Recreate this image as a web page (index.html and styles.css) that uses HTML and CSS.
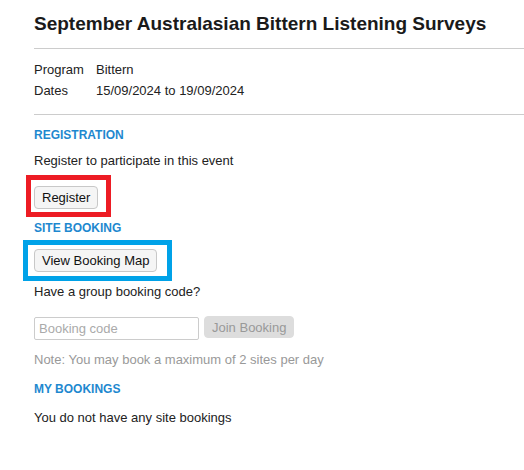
FILE: index.html
```html
<!DOCTYPE html>
<html lang="en">
<head>
    <title>Event</title>
    <link rel="stylesheet" href="styles.css">
</head>

<body>
    <div class="page">
        <h1>September Australasian Bittern Listening Surveys</h1>
        <hr>
        <table class="info">
            <tr><td class="lbl">Program</td><td>Bittern</td></tr>
            <tr><td class="lbl">Dates</td><td>15/09/2024 to 19/09/2024</td></tr>
        </table>
        <hr>

        <h3>REGISTRATION</h3>
        <p>Register to participate in this event</p>
        <div class="mark red">
            <button class="btn">Register</button>
        </div>

        <h3 class="tight">SITE BOOKING</h3>
        <div class="mark blue">
            <button class="btn">View Booking Map</button>
        </div>
        <p class="ask">Have a group booking code?</p>
        <div class="join">
            <input type="text" placeholder="Booking code">
            <button class="btn off" disabled>Join Booking</button>
        </div>
        <p class="note">Note: You may book a maximum of 2 sites per day</p>

        <h3 class="mine">MY BOOKINGS</h3>
        <p class="empty">You do not have any site bookings</p>
    </div>
</body>

</html>
```

FILE: styles.css
```css
body {
    margin: 0;
    font-family: "Liberation Sans", Arial, sans-serif;
    font-size: 13px;
    line-height: 15px;
    color: #222;
    background: #fff;
}

.page {
    padding: 12px 0 0 34px;
}

h1 {
    font-size: 19px;
    line-height: 23px;
    font-weight: bold;
    color: #1a1a1a;
    margin: 0 0 13px 0;
}

hr {
    border: none;
    border-top: 1px solid #ccc;
    margin: 0;
}

.info {
    border-collapse: collapse;
    margin: 10px 0 13px 0;
}

.info td {
    padding: 0;
    height: 21px;
}

.info .lbl {
    width: 62px;
}

h3 {
    font-size: 12px;
    line-height: 14px;
    font-weight: bold;
    color: #1e88cf;
    margin: 13px 0 0 0;
}

h3.tight {
    margin-top: 4px;
}

h3.mine {
    margin-top: 15px;
}

p {
    margin: 11px 0 0 0;
}

p.ask {
    margin-top: 3px;
}

p.empty {
    margin-top: 14px;
}

.mark {
    display: inline-block;
    border: 5px solid;
    margin-left: -8px;
}

.red {
    border-color: #ed1c24;
    padding: 6px 8px 3px 3px;
    margin-top: 7px;
}

.blue {
    border-color: #00a2e8;
    padding: 4px 10px 4px 6px;
    margin-top: 5px;
    margin-left: -11px;
}

.mark .btn {
    display: block;
}

.btn {
    font-family: "Liberation Sans", Arial, sans-serif;
    font-size: 13px;
    color: #111;
    background: #f5f5f5;
    border: 1px solid #c8c8c8;
    border-radius: 4px;
    padding: 3px 7px;
    height: 23px;
}

.join {
    display: flex;
    align-items: flex-start;
    gap: 5px;
    margin-top: 17px;
}

.join input {
    width: 165px;
    height: 23px;
    box-sizing: border-box;
    border: 1px solid #ccc;
    border-radius: 2px;
    padding: 2px 4px;
    font-family: "Liberation Sans", Arial, sans-serif;
    font-size: 13px;
    margin-top: 1px;
}

.join input::placeholder {
    color: #aaa;
}

.btn.off {
    background: #ddd;
    color: #999;
    border-color: #ddd;
    height: 22px;
}

.note {
    color: #999;
    margin-top: 12px;
}
```
